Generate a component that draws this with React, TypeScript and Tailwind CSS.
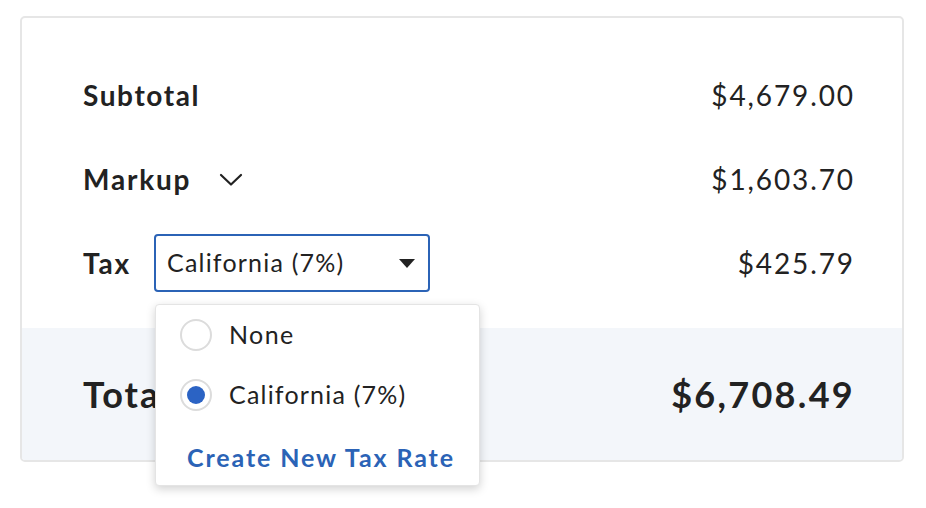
import React from "react";

export default function App() {
  return (
    <div className="w-[926px] h-[508px] bg-white pt-[16px] pl-[20px]" style={{ fontFamily: "Lato, 'Open Sans', sans-serif" }}>
      <div className="w-[884px] h-[446px] border-2 border-[#e6e6e6] rounded-[5px] flex flex-col text-[#222222]">
        <div className="flex-1 pl-[61px] pr-[49px] pt-[35px] flex flex-col">
          <div className="h-[84px] flex items-center justify-between">
            <span className="text-[28px] font-bold tracking-[1.6px]">Subtotal</span>
            <span className="text-[28px] tracking-[1.9px] -mr-[2px]">$4,679.00</span>
          </div>
          <div className="h-[84px] flex items-center justify-between">
            <div className="flex items-center">
              <span className="text-[28px] font-bold tracking-[1.8px]">Markup</span>
              <svg width="24" height="14" viewBox="0 0 24 14" className="ml-[28px] mt-[2px]">
                <path d="M2 2 L12 11.5 L22 2" fill="none" stroke="#222222" strokeWidth="2.2" strokeLinecap="round" strokeLinejoin="round" />
              </svg>
            </div>
            <span className="text-[28px] tracking-[1.9px] -mr-[2px]">$1,603.70</span>
          </div>
          <div className="h-[84px] flex items-center justify-between">
            <div className="flex items-center">
              <span className="text-[28px] font-bold tracking-[1.8px] w-[71px]">Tax</span>
              <div className="relative">
                <div className="w-[276px] h-[58px] border-2 border-[#2b63b6] rounded-[4px] flex items-center justify-between pl-[11px] pr-[13px]">
                  <span className="text-[25px] tracking-[1.2px]">California (7%)</span>
                  <svg width="16" height="9" viewBox="0 0 16 9">
                    <path d="M0 0 L16 0 L8 9 Z" fill="#222222" />
                  </svg>
                </div>
                <div className="absolute left-[1px] top-[70px] w-[325px] h-[182px] bg-white rounded-[4px] border border-[#e4e4e4] shadow-[0_3px_10px_rgba(0,0,0,0.18)] z-10 flex flex-col pl-[24px] pt-[14px]">
                  <div className="h-[32px] flex items-center">
                    <span className="w-[32px] h-[32px] rounded-full border-2 border-[#dcdcdc] bg-white"></span>
                    <span className="text-[25px] tracking-[1.4px] ml-[17px]">None</span>
                  </div>
                  <div className="h-[32px] mt-[28px] flex items-center">
                    <span className="w-[32px] h-[32px] rounded-full border-2 border-[#dcdcdc] bg-white flex items-center justify-center">
                      <span className="w-[18px] h-[18px] rounded-full bg-[#2b63c4]"></span>
                    </span>
                    <span className="text-[25px] tracking-[1.2px] ml-[17px]">California (7%)</span>
                  </div>
                  <div className="mt-[28px] -ml-[17px] pl-[24px] text-[25px] font-bold tracking-[1.9px] text-[#2b63b6]">
                    Create New Tax Rate
                  </div>
                </div>
              </div>
            </div>
            <span className="text-[28px] tracking-[1.9px] -mr-[2px]">$425.79</span>
          </div>
        </div>
        <div className="h-[132px] bg-[#f3f6fa] rounded-b-[3px] pl-[61px] pr-[49px] flex items-center justify-between">
          <span className="text-[36px] font-bold tracking-[2px]">Total</span>
          <span className="text-[36px] font-bold tracking-[2.3px] -mr-[2px]">$6,708.49</span>
        </div>
      </div>
    </div>
  );
}
